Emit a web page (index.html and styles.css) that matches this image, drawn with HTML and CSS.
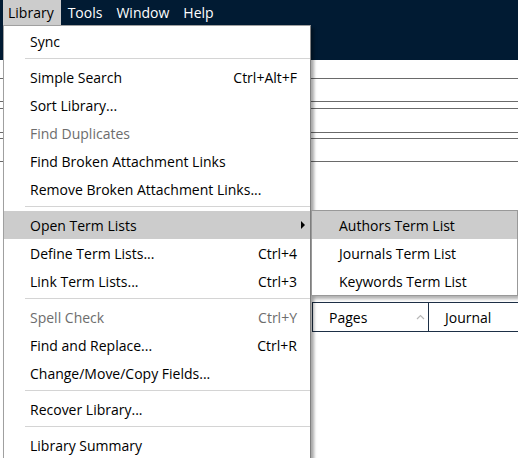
FILE: index.html
```html
<!DOCTYPE html>
<html>
<head>
<meta charset="utf-8">
<link rel="stylesheet" href="styles.css">
</head>
<body>
<div class="app">
  <div class="topbar">
    <div class="menubar">
      <span class="mb-item active">Library</span>
      <span class="mb-item">Tools</span>
      <span class="mb-item">Window</span>
      <span class="mb-item">Help</span>
    </div>
  </div>
  <div class="content">
    <div class="rule r1"></div>
    <div class="rule r2"></div>
    <div class="rule r3"></div>
    <div class="rule r4"></div>
    <div class="rule r5"></div>
    <div class="rule r6"></div>
    <div class="table-head">
      <div class="th th-pages">Pages
        <svg class="caret" width="9" height="6" viewBox="0 0 9 6"><path d="M1 5 L4.5 1.5 L8 5" fill="none" stroke="#b8b8b8" stroke-width="1.2"/></svg>
      </div>
      <div class="th th-journal">Journal</div>
    </div>
  </div>

  <div class="menu">
    <div class="mi">Sync</div>
    <div class="sep"></div>
    <div class="mi"><span>Simple Search</span><span>Ctrl+Alt+F</span></div>
    <div class="mi">Sort Library...</div>
    <div class="mi disabled">Find Duplicates</div>
    <div class="mi">Find Broken Attachment Links</div>
    <div class="mi">Remove Broken Attachment Links...</div>
    <div class="sep"></div>
    <div class="mi hl"><span>Open Term Lists</span><span class="arrow"></span></div>
    <div class="mi"><span>Define Term Lists...</span><span>Ctrl+4</span></div>
    <div class="mi"><span>Link Term Lists...</span><span>Ctrl+3</span></div>
    <div class="sep"></div>
    <div class="mi disabled"><span>Spell Check</span><span>Ctrl+Y</span></div>
    <div class="mi"><span>Find and Replace...</span><span>Ctrl+R</span></div>
    <div class="mi">Change/Move/Copy Fields...</div>
    <div class="sep"></div>
    <div class="mi">Recover Library...</div>
    <div class="sep"></div>
    <div class="mi">Library Summary</div>
  </div>

  <div class="submenu">
    <div class="mi hl">Authors Term List</div>
    <div class="mi">Journals Term List</div>
    <div class="mi">Keywords Term List</div>
  </div>
</div>
</body>
</html>
```

FILE: styles.css
```css
html, body {
  margin: 0;
  padding: 0;
  background: #ffffff;
}
body {
  font-family: "Open Sans", "Noto Sans", sans-serif;
  font-size: 14px;
  color: #000;
}
.app {
  position: relative;
  width: 518px;
  height: 458px;
  overflow: hidden;
  background: #fff;
}
.topbar {
  height: 60px;
  background: #011b33;
}
.menubar {
  display: flex;
  height: 25px;
  padding-left: 3px;
}
.mb-item {
  color: #fff;
  line-height: 26px;
  padding: 0 7px;
}
.mb-item.active {
  background: #cccccc;
  color: #000;
  padding-left: 5px;
}
.content {
  display: flex;
  flex-direction: column;
}
.rule {
  height: 1px;
  background: #6a6a6a;
}
.r1 { margin-top: 18px; }
.r2 { margin-top: 22px; }
.r3 { margin-top: 6px; }
.r4 { margin-top: 23px; }
.r5 { margin-top: 5px; }
.r6 { margin-top: 22px; }
.table-head {
  margin-top: 140px;
  margin-left: 312px;
  display: flex;
  height: 28px;
  border-top: 1px solid #1d2f46;
  border-bottom: 1px solid #1d2f46;
  border-left: 1px solid #1d2f46;
}
.th {
  display: flex;
  align-items: center;
  padding-left: 16px;
  line-height: 29px;
}
.th-pages {
  width: 99px;
  border-right: 1px solid #1d2f46;
  position: relative;
}
.caret {
  position: absolute;
  right: 3px;
  top: 11px;
}
.th-journal {
  flex: 1;
}

.menu {
  position: absolute;
  left: 3px;
  top: 25px;
  width: 306px;
  background: #fff;
  border: 1px solid #a0a0a0;
  border-right-color: #808080;
  padding-top: 1px;
  box-shadow: 3px 3px 3px rgba(0, 0, 0, 0.35);
}
.mi {
  height: 28px;
  line-height: 29px;
  padding: 0 13px 0 26px;
  display: flex;
  justify-content: space-between;
  align-items: center;
  white-space: nowrap;
}
.mi.disabled {
  color: #6d6d6d;
}
.mi.hl {
  background: #cccccc;
}
.sep {
  height: 1px;
  background: #d4d4d4;
  margin: 3px 0 4px 21px;
}
.arrow {
  width: 0;
  height: 0;
  border-top: 4px solid transparent;
  border-bottom: 4px solid transparent;
  border-left: 4px solid #000;
  margin-right: -8px;
}
.submenu {
  position: absolute;
  left: 311px;
  top: 210px;
  width: 205px;
  background: #fff;
  border: 1px solid #999;
  box-shadow: 2px 3px 3px rgba(0, 0, 0, 0.3);
}
.submenu .mi {
  padding-left: 27px;
}
```
